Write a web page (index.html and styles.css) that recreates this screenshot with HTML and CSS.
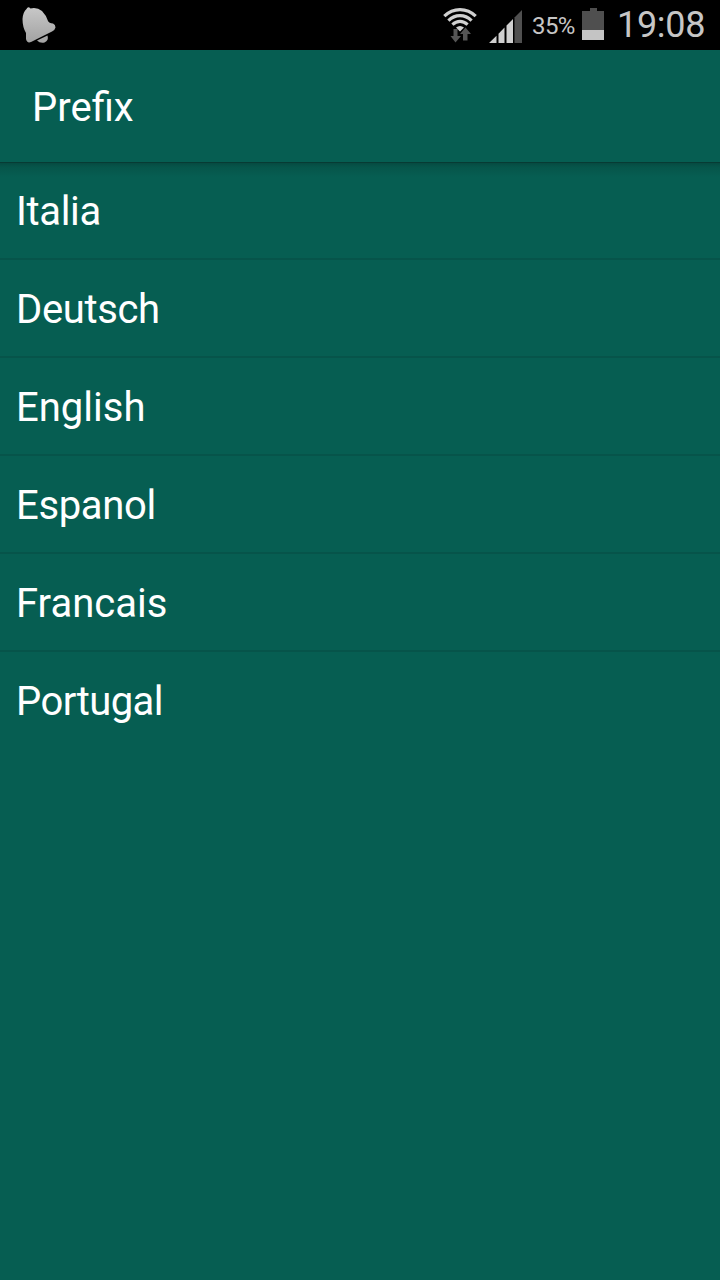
FILE: index.html
```html
<!DOCTYPE html><html lang="it"><head><meta charset="utf-8">
<title>Prefix</title>
<link rel="stylesheet" href="styles.css">
</head><body>

<div class="statusbar">
	<svg class="bell" width="36" height="38" viewBox="0 0 36 38">
		<defs>
			<linearGradient id="metal" x1="0" y1="0" x2="0" y2="1">
				<stop offset="0" stop-color="#c8c8c8"/>
				<stop offset="1" stop-color="#a2a2a2"/>
			</linearGradient>
		</defs>
		<path fill="url(#metal)" d="M5.500 3Q7 0 9.500 2.500Q16 1 21 5Q25 9 27 15Q28 17 32 17.500Q34.500 18.500 34.500 21.500Q34 24 31 25.500L10 36Q6 37.500 5 33V27Q1.500 21 1.500 13Q2 6 5.500 3Z"/>
		<path fill="#a6a6a6" d="M16 34.500L26.500 29.500Q28 34.500 23.500 36.500Q19 37.500 16 34.500Z"/>
	</svg>
	<svg class="wifi" width="34" height="36" viewBox="0 0 34 36">
		<g fill="none" stroke="#d0d0d0" stroke-width="3.2">
			<path d="M1.300 9.200Q8 2.600 17 2.600T32.700 9.200"/>
			<path d="M5.400 13.600Q10.500 8.600 17 8.600T28.600 13.600"/>
			<path d="M9.400 17.600Q13 14.400 17 14.400T24.600 17.600"/>
		</g>
		<path fill="#555" d="M10.500 22H14.500V29H18L12.500 35.500L7.500 29H10.500Z"/>
		<path fill="#555" d="M20 33.500H24.500V27H28L22.500 20.500L17 27H20Z"/>
		<path fill="#d0d0d0" d="M13 20.500Q17 17.500 21 20.500L17 24.500Z"/>
	</svg>
	<svg class="signal" width="34" height="34" viewBox="0 0 34 34">
		<path fill="#d0d0d0" d="M0 33L7.500 25.700V33ZM9.500 23.700L15.500 17.500V33H9.500ZM17.500 15.500L24 9V33H17.500Z"/>
		<path fill="#505050" d="M25.500 7.500L33 0V33H25.500Z"/>
	</svg>
	<span class="percent">35%</span>
	<svg class="battery" width="22" height="32" viewBox="0 0 22 32">
		<path fill="#4f4f4f" d="M8 0H15V3H22V22H0V3H8Z"/>
		<path fill="#c4c4c4" d="M0 22H22V32H0Z"/>
	</svg>
	<span class="clock">19:08</span>
</div>

<h1 class="title">Prefix</h1>

<ul class="prefixes">
	<li>Italia</li>
	<li>Deutsch</li>
	<li class="loose">English</li>
	<li>Espanol</li>
	<li class="loose">Francais</li>
	<li class="tight">Portugal</li>
</ul>

</body></html>
```

FILE: styles.css
```css
body {
	margin: 0;
	min-height: 1280px;
	background: #065e52;
	color: #fff;
	font-family: Roboto, sans-serif;
}
.statusbar {
	display: flex;
	align-items: flex-start;
	height: 50px;
	background: #000;
	color: #c6c6c6;
}
.bell {
	margin: 6px auto 0 21px;
}
.wifi {
	margin: 7px 12px 0 0;
}
.signal {
	margin: 10px 9px 0 0;
}
.percent {
	width: 50px;
	font-size: 24px;
	line-height: 52px;
	letter-spacing: -.6px;
}
.battery {
	margin-top: 8px;
}
.clock {
	width: 103px;
	margin-left: 13px;
	font-size: 36px;
	line-height: 50px;
	letter-spacing: -.3px;
}
.title {
	height: 109px;
	margin: 0;
	padding: 3px 0 0 32px;
	font-size: 40px;
	font-weight: normal;
	line-height: 110px;
}
.prefixes {
	margin: 0;
	padding: 0;
	list-style: none;
	background: linear-gradient(#073b34 1px, #064a41 1px, #06554a 5px, #065e52 15px) no-repeat;
}
.prefixes li {
	height: 92px;
	padding: 4px 0 0 16px;
	font-size: 40px;
	line-height: 92px;
	letter-spacing: -.35px;
	border-bottom: 2px solid #06544a;
}
.prefixes li.loose {
	letter-spacing: 0;
}
.prefixes li.tight {
	letter-spacing: -.55px;
}
.prefixes li:last-child {
	border-bottom: none;
}
```
